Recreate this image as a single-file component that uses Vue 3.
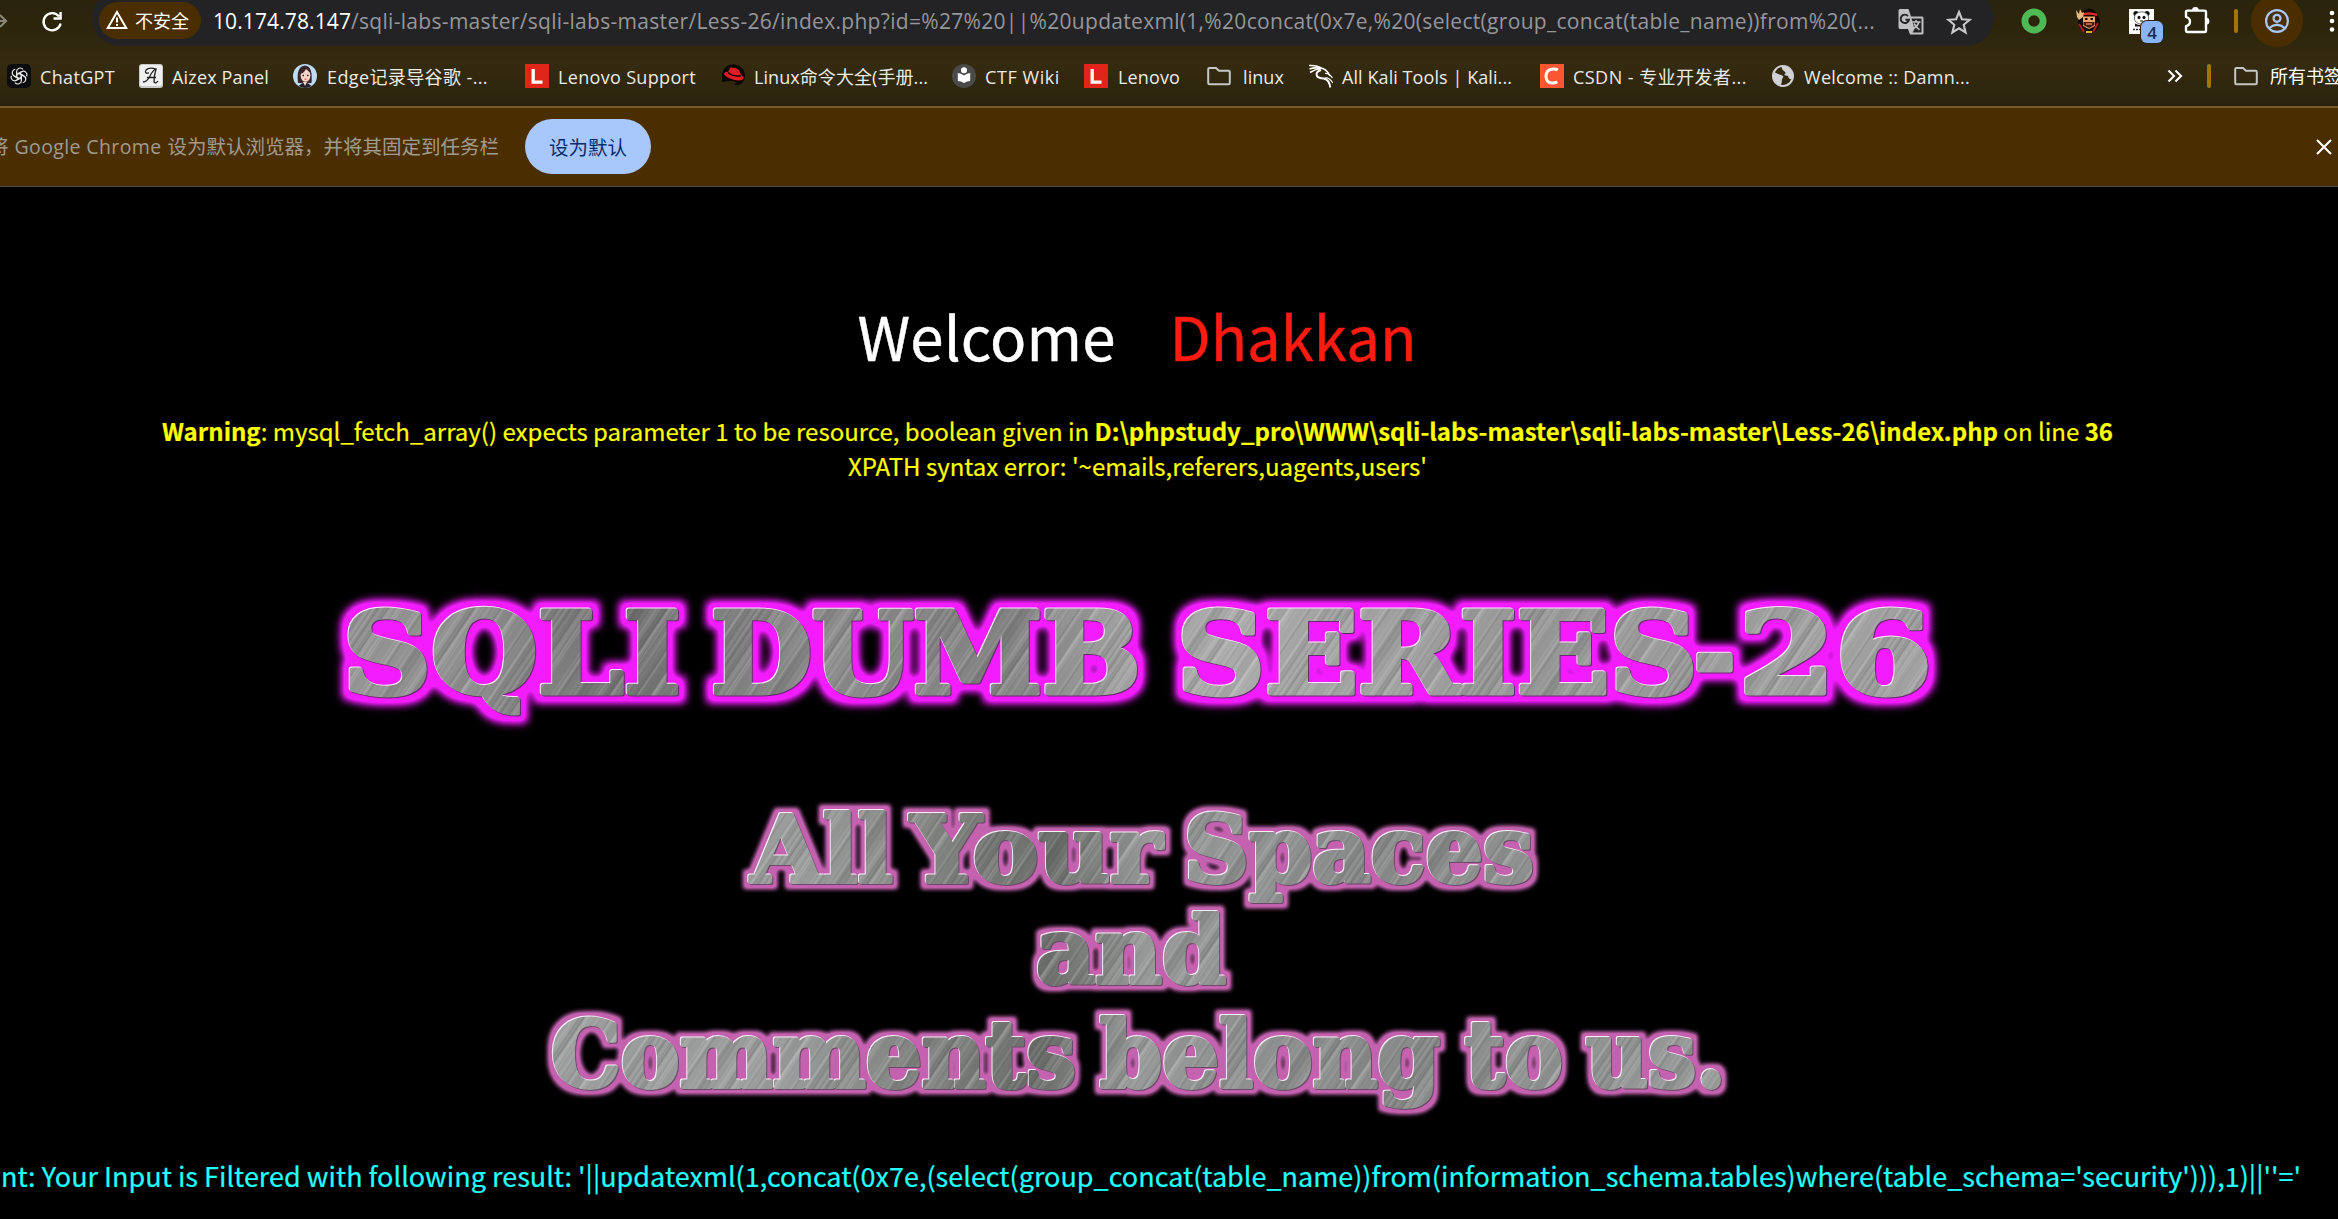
<script setup>
// v-fit="px": tracks the text so that it takes exactly the given width
const vFit = {
  mounted(el, { value }) {
    const natural = el.getBoundingClientRect().width
    el.style.letterSpacing = (value - natural) / el.textContent.length + 'px'
  },
}

const bookmarks = [
  { icon: 'gpt', text: 'ChatGPT', width: 75, left: 7, gap: 9 },
  { icon: 'aizex', text: 'Aizex Panel', width: 97, left: 139, gap: 9 },
  { icon: 'girl', text: 'Edge记录导谷歌 -...', width: 161, left: 293, gap: 10 },
  { icon: 'lenovo', text: 'Lenovo Support', width: 138, left: 525, gap: 9 },
  { icon: 'redhat', text: 'Linux命令大全(手册...', width: 174, left: 721, gap: 9 },
  { icon: 'ctf', text: 'CTF Wiki', width: 75, left: 952, gap: 9 },
  { icon: 'lenovo', text: 'Lenovo', width: 62, left: 1084, gap: 10 },
  { icon: 'folder', text: 'linux', width: 41, left: 1207, gap: 12 },
  { icon: 'kali', text: 'All Kali Tools | Kali...', width: 170, left: 1309, gap: 9 },
  { icon: 'csdn', text: 'CSDN - 专业开发者...', width: 174, left: 1540, gap: 9 },
  { icon: 'globe', text: 'Welcome :: Damn...', width: 166, left: 1771, gap: 9 },
]
bookmarks.forEach((b, i) => {
  const prev = bookmarks[i - 1]
  b.margin = prev ? b.left - (prev.left + 24 + prev.gap + prev.width) : b.left
})

const seriesWords = [
  { text: 'SQLI', x: 343, y: 692, w: 338 },
  { text: 'DUMB', x: 711, y: 692, w: 430 },
  { text: 'SERIES', x: 1177, y: 692, w: 521 },
  { text: '-', x: 1694, y: 692, w: 42 },
  { text: '26', x: 1739, y: 692, w: 193 },
]
const sloganWords = [
  { text: 'All', x: 751, y: 881, w: 142 },
  { text: 'Your', x: 911, y: 881, w: 251 },
  { text: 'Spaces', x: 1184, y: 881, w: 350 },
  { text: 'and', x: 1036, y: 982, w: 190 },
  { text: 'Comments', x: 551, y: 1086, w: 525 },
  { text: 'belong', x: 1100, y: 1086, w: 340 },
  { text: 'to', x: 1465, y: 1086, w: 98 },
  { text: 'us.', x: 1586, y: 1086, w: 140 },
]

// fine scratches of the brushed metal
const rand = (n) => Math.abs(Math.sin(n * 12.9898) * 43758.5453) % 1
const scratches = Array.from({ length: 90 }, (_, i) => ({
  x: rand(i + 1) * 158,
  w: 0.6 + rand(i + 101) * 1.6,
  fill: i % 2 ? '#fff' : '#222',
  o: (i % 2 ? 0.05 : 0.03) + rand(i + 201) * 0.12,
}))
</script>

<template>
  <div class="window">
    <header class="chrome">
      <div class="toolbar">
        <svg class="forward" width="8" height="24" viewBox="0 0 8 24"><path d="M0 12H6M0 6L6 12L0 18" fill="none" stroke="#8b8778" stroke-width="2.2" /></svg>
        <svg class="reload" width="24" height="24" viewBox="0 0 24 24"><path d="M19 7.5A8.6 8.6 0 1 0 20.6 14.5M20.6 3V9.5H13.5" fill="none" stroke="#fff" stroke-width="2.4" /></svg>
        <div class="address">
          <div class="chip">
            <svg width="22" height="20" viewBox="0 0 22 20"><path d="M11 2L20.2 18H1.8Z" fill="none" stroke="#fff" stroke-width="2" /><path d="M11 7.5V12.6M11 14V16" stroke="#fff" stroke-width="2" /></svg>
            <span v-fit="54">不安全</span>
          </div>
          <div class="url"><span v-fit="138" class="host">10.174.78.147</span><span v-fit="1524">/sqli-labs-master/sqli-labs-master/Less-26/index.php?id=%27%20||%20updatexml(1,%20concat(0x7e,%20(select(group_concat(table_name))from%20(...</span></div>
          <svg class="translate" width="26" height="26" viewBox="0 0 26 26">
            <path d="M2 0H10.5L13 7.5H24Q25.5 7.5 25.5 9V24Q25.5 25.5 24 25.5H12L10 20H2Q.5 20 .5 18V2Q.5 0 2 0Z" fill="#c0c0c2" />
            <path d="M13.5 9.5H23.5V23.5H14.5L16.5 20Z" fill="#242428" />
            <path d="M10 7A4.2 4.2 0 1 0 11 10.7H7.5" fill="none" stroke="#242428" stroke-width="1.9" />
            <path d="M14 13H22.5M18 11V13M21 13Q19.5 17.5 15.5 19.5M16 14.5Q18 18 21.5 21" fill="none" stroke="#c0c0c2" stroke-width="1.6" />
          </svg>
          <svg class="star" width="26" height="26" viewBox="0 0 26 26"><path d="M13 3L15.9 10.2L23.6 10.8L17.7 15.8L19.6 23.4L13 19.3L6.4 23.4L8.3 15.8L2.4 10.8L10.1 10.2Z" fill="none" stroke="#c7c7c7" stroke-width="2.1" /></svg>
        </div>
        <div class="tools">
          <svg class="ring" width="26" height="26" viewBox="0 0 26 26"><circle cx="13" cy="13" r="9.1" fill="none" stroke="#4fb955" stroke-width="6.8" /></svg>
          <svg class="ninja" width="26" height="26" viewBox="0 0 26 26">
            <circle cx="14" cy="14" r="11" fill="#100b08" />
            <path d="M8 3Q14-2 20 3L21 8H7Z" fill="#080605" /><path d="M6 7Q14 4 22 7" fill="none" stroke="#e02b2b" stroke-width="2.4" />
            <path d="M8 8.5H20V18L14 21L8 18Z" fill="#e7a46c" /><path d="M8.5 14H19.5V17L14 20L8.5 17Z" fill="#4a150f" /><path d="M10 11H12.5M15.5 11H18" stroke="#180c08" stroke-width="1.8" />
            <path d="M1 2L4 6L5 1L7 5L9 4L8 9L4 12L2 9Z" fill="#eab87a" /><path d="M4 16L9 24M23 15L18 24" stroke="#b31c1c" stroke-width="2" /><path d="M11 24H17" stroke="#d9b12c" stroke-width="2" />
            <path d="M11 16H17" stroke="#e08a5a" stroke-width="1.4" />
          </svg>
          <div class="panda">
            <svg width="25" height="25" viewBox="0 0 25 25">
              <rect width="25" height="25" fill="#fff" /><circle cx="7" cy="4.5" r="2.6" fill="#111" /><circle cx="18" cy="4.5" r="2.6" fill="#111" />
              <ellipse cx="12.5" cy="9" rx="7.2" ry="6.2" fill="#fff" stroke="#444" stroke-width=".8" /><ellipse cx="10" cy="8.5" rx="1.5" ry="1.8" fill="#111" /><ellipse cx="15" cy="8.5" rx="1.5" ry="1.8" fill="#111" /><path d="M11 12H14" stroke="#111" />
              <path d="M6 14.5Q12 18 18 14.5L19 17.5H6Z" fill="#161616" /><path d="M4 20.5H13" stroke="#333" stroke-width="1.5" stroke-dasharray="2 1" />
            </svg>
            <span class="badge">4</span>
          </div>
          <svg class="puzzle" width="26" height="28" viewBox="0 0 26 28"><path d="M2 5.8Q2 4.6 3.2 4.6H20.5Q22 4.6 22 6V25Q22 26 20.7 26H3.2Q2 26 2 24.8V20.2Q6 19 6 15.5Q6 12 2 10.8Z" fill="none" stroke="#fff" stroke-width="2.4" stroke-linejoin="round" /><path d="M8 4.5A3.4 3.4 0 0 1 14.8 4.5ZM22 11.8A3.4 3.4 0 0 1 22 18.6Z" fill="#fff" /></svg>
          <i class="divider" />
          <div class="avatar"><svg width="26" height="26" viewBox="0 0 26 26" fill="none" stroke="#a8c7fa" stroke-width="2.2"><circle cx="13" cy="13" r="10.9" /><circle cx="13" cy="10.3" r="3.5" /><path d="M5.2 20Q13 13.5 20.8 20" /></svg></div>
          <svg class="dots" width="6" height="26" viewBox="0 0 6 26" fill="#fff"><circle cx="3" cy="5" r="2.3" /><circle cx="3" cy="13" r="2.3" /><circle cx="3" cy="21.5" r="2.3" /></svg>
        </div>
      </div>

      <nav class="bookmarks">
        <div v-for="(b, i) in bookmarks" :key="i" class="bookmark" :style="{ marginLeft: b.margin + 'px', gap: b.gap + 'px' }">
          <svg width="24" height="24" viewBox="0 0 24 24">
            <g v-if="b.icon === 'gpt'">
              <rect width="24" height="24" rx="5" fill="#0c0c0c" />
              <g fill="none" stroke="#e6e6e6" stroke-width="1.2"><path v-for="n in 6" :key="n" :transform="`rotate(${n * 60} 12 12)`" d="M12 14.7L9.6 13.3V7.6A3.6 3.6 0 0 1 16 5.4M12 9.2L16.9 12" /></g>
            </g>
            <g v-else-if="b.icon === 'aizex'">
              <rect width="24" height="24" rx="3" fill="#c9c9c9" /><rect x="1" y="1" width="22" height="21" rx="2" fill="#f0f0f0" />
              <path d="M4 18Q8 18 11 12T17 5Q15 12 15 18Q17 20 19 17M8 13.5H17M10 9Q5 10 7 6Q10 3 17 5" fill="none" stroke="#222" stroke-width="1.3" />
            </g>
            <g v-else-if="b.icon === 'girl'">
              <circle cx="12" cy="12" r="12" fill="#bfdcf5" /><path d="M5 19Q3 2 12 1.5Q20 2 18.5 19Z" fill="#3a2626" /><ellipse cx="12.5" cy="11.5" rx="4.9" ry="6.3" fill="#f6d5c6" />
              <path d="M7 10Q12 9 13 4Q15 8 18 9Q18 3 12 3Q7 4 7 10Z" fill="#3a2626" /><path d="M5.5 22Q12 15 18.5 22Q12 26 5.5 22Z" fill="#20202a" /><path d="M10 18L12 22L14 18Z" fill="#f6d5c6" />
              <path d="M9.5 11.5H11M14 11.5H15.5" stroke="#322" stroke-width="1.4" /><path d="M11.5 15.2H13.5" stroke="#d5494f" stroke-width="1.1" />
            </g>
            <g v-else-if="b.icon === 'lenovo'"><rect width="24" height="24" fill="#e1251b" /><path d="M8.2 5V18.2H17.5" fill="none" stroke="#fff" stroke-width="3.3" /></g>
            <g v-else-if="b.icon === 'redhat'">
              <path d="M1 13A11.5 11.5 0 1 1 23.5 15Q21 21 15 21Q17 18 12 17Q4 17 1 18Z" fill="#070404" /><path d="M7 8L9.5 3.5Q15 3 18 6L20 11Q24 13 22 15.5Q17 18 9 14.5Q3 12 3 9.5Q4 7 7 8Z" fill="#e31b23" /><path d="M7 8.5Q12 13 19.8 11.8" fill="none" stroke="#120505" stroke-width="1.5" /><path d="M13 20L16 18L15 22Z" fill="#111" />
            </g>
            <g v-else-if="b.icon === 'ctf'"><circle cx="12" cy="12" r="12" fill="#4a4a4a" /><circle cx="12" cy="6.2" r="3" fill="#fff" /><path d="M12 11.5Q9 9 5.8 9V17Q9 17 12 19Q15 17 18.2 17V9Q15 9 12 11.5Z" fill="#fff" /></g>
            <path v-else-if="b.icon === 'folder'" d="M1.2 5.2Q1.2 4 2.4 4H9L12 6.8H21.6Q22.8 6.8 22.8 8V19Q22.8 20.2 21.6 20.2H2.4Q1.2 20.2 1.2 19Z" fill="none" stroke="#c4c7c5" stroke-width="2" />
            <g v-else-if="b.icon === 'kali'" fill="none" stroke="#fff"><path d="M0 1.5Q8 1 13 4.5M.5 5Q6 3 12 4.5M1 8.5Q6 5 11.5 4.7M11 4Q17 4 21 12" stroke-width="1.6" /><path d="M12 6Q6 8 8 12Q9 14 15 14.5Q20.5 16 21.2 23.5" stroke-width="2" /><path d="M16 9.5Q20 9 23.5 14M16 14Q20 13 24 19" stroke-width="1.2" /></g>
            <g v-else-if="b.icon === 'csdn'"><rect width="24" height="24" fill="#fc5531" /><path d="M17.8 6Q16 4.8 13 5Q6 5.5 6 12.5Q6.3 19 12 19Q15.5 19 17.3 17.7" fill="none" stroke="#fff" stroke-width="3" /></g>
            <g v-else><circle cx="12" cy="12" r="10" fill="none" stroke="#d0d1d5" stroke-width="2" /><path d="M3 8Q7 10 10 11Q14 12 11 15Q11 18 10 21Q2 20 2 12ZM11 2Q10 5 13 7Q16 9 13 11L17 12Q18 16 21 15Q23 7 16 3Z" fill="#d0d1d5" /></g>
          </svg>
          <span v-fit="b.width">{{ b.text }}</span>
        </div>
        <div class="bookmark-end">
          <svg width="16" height="14" viewBox="0 0 16 14"><path d="M1.5 1.5L7 7L1.5 12.5M8.5 1.5L14 7L8.5 12.5" fill="none" stroke="#fff" stroke-width="2.1" /></svg>
          <i class="divider" />
          <svg class="all-folder" width="24" height="24" viewBox="0 0 24 24"><path d="M1.2 5.2Q1.2 4 2.4 4H9L12 6.8H21.6Q22.8 6.8 22.8 8V19Q22.8 20.2 21.6 20.2H2.4Q1.2 20.2 1.2 19Z" fill="none" stroke="#c4c7c5" stroke-width="2" /></svg>
          <span class="all">所有书签</span>
        </div>
      </nav>
    </header>

    <div class="infobar">
      <p><span class="cut">将</span><span v-fit="147" class="brand">Google Chrome</span><span>设为默认浏览器，并将其固定到任务栏</span></p>
      <button>设为默认</button>
      <svg width="18" height="18" viewBox="0 0 18 18"><path d="M2 2L16 16M16 2L2 16" stroke="#fff" stroke-width="2.1" /></svg>
    </div>

    <main>
      <h1><span v-fit="258">Welcome</span><span v-fit="247" class="name">Dhakkan</span></h1>
      <div class="messages">
        <p v-fit="1951"><b>Warning</b>: mysql_fetch_array() expects parameter 1 to be resource, boolean given in <b>D:\phpstudy_pro\WWW\sqli-labs-master\sqli-labs-master\Less-26\index.php</b> on line <b>36</b></p>
        <p v-fit="579">XPATH syntax error: '~emails,referers,uagents,users'</p>
      </div>
      <svg class="art" width="2338" height="600" viewBox="0 540 2338 600">
        <defs>
          <linearGradient id="sheen" gradientUnits="userSpaceOnUse" x1="340" y1="0" x2="1930" y2="0">
            <stop offset="0" stop-color="#969696" /><stop offset=".1" stop-color="#8b8b8b" /><stop offset=".18" stop-color="#717171" /><stop offset=".3" stop-color="#8c8c8c" /><stop offset=".42" stop-color="#828282" /><stop offset=".49" stop-color="#a0a0a0" /><stop offset=".56" stop-color="#aaaaaa" /><stop offset=".75" stop-color="#969696" /><stop offset="1" stop-color="#a2a2a2" />
          </linearGradient>
          <linearGradient id="sheen2" gradientUnits="userSpaceOnUse" x1="550" y1="1000" x2="1730" y2="1000" gradientTransform="rotate(4 1100 1000)">
            <stop offset="0" stop-color="#9a9d9b" /><stop offset=".2" stop-color="#9a9d9b" /><stop offset=".34" stop-color="#7c7e7c" /><stop offset=".42" stop-color="#6c6e6c" /><stop offset=".5" stop-color="#969997" /><stop offset=".7" stop-color="#868987" /><stop offset="1" stop-color="#989b99" />
          </linearGradient>
          <pattern id="scratch" patternUnits="userSpaceOnUse" width="160" height="300" patternTransform="rotate(34)">
            <rect v-for="(s, i) in scratches" :key="i" :x="s.x" y="0" :width="s.w" height="300" :fill="s.fill" :opacity="s.o" />
          </pattern>
          <pattern id="metal" patternUnits="userSpaceOnUse" width="2338" height="1219"><rect width="2338" height="1219" fill="url(#sheen)" /><rect width="2338" height="1219" fill="url(#scratch)" /></pattern>
          <pattern id="metal2" patternUnits="userSpaceOnUse" width="2338" height="1219"><rect width="2338" height="1219" fill="url(#sheen2)" /><rect width="2338" height="1219" fill="url(#scratch)" /></pattern>
          <filter id="neon" filterUnits="userSpaceOnUse" x="300" y="560" width="1700" height="190" color-interpolation-filters="sRGB">
            <feMorphology in="SourceAlpha" operator="dilate" radius="7" /><feGaussianBlur stdDeviation="4.5" /><feComponentTransfer result="halo"><feFuncA type="linear" slope="1.5" /></feComponentTransfer>
            <feFlood flood-color="#f31cff" /><feComposite in2="halo" operator="in" result="glow" />
            <feOffset in="SourceAlpha" dx="1" dy="1" result="o1" /><feFlood flood-color="#6a2a70" /><feComposite in2="o1" operator="in" result="dark" />
            <feOffset in="SourceAlpha" dx="-1.4" dy="-1.4" result="o2" /><feFlood flood-color="#fff" flood-opacity=".9" /><feComposite in2="o2" operator="in" result="light" />
            <feMerge><feMergeNode in="glow" /><feMergeNode in="dark" /><feMergeNode in="light" /><feMergeNode in="SourceGraphic" /></feMerge>
          </filter>
          <filter id="soft" filterUnits="userSpaceOnUse" x="500" y="780" width="1300" height="350" color-interpolation-filters="sRGB">
            <feMorphology in="SourceAlpha" operator="dilate" radius="5" /><feGaussianBlur stdDeviation="2" /><feComponentTransfer result="halo"><feFuncA type="linear" slope="1.3" /></feComponentTransfer>
            <feFlood flood-color="#c462b0" /><feComposite in2="halo" operator="in" result="glow" />
            <feOffset in="SourceAlpha" dx="1" dy="1" result="o1" /><feFlood flood-color="#6b4a66" /><feComposite in2="o1" operator="in" result="dark" />
            <feOffset in="SourceAlpha" dx="-1.4" dy="-1.4" result="o2" /><feFlood flood-color="#fff" flood-opacity=".9" /><feComposite in2="o2" operator="in" result="light" />
            <feMerge><feMergeNode in="glow" /><feMergeNode in="dark" /><feMergeNode in="light" /><feMergeNode in="SourceGraphic" /></feMerge>
          </filter>
        </defs>
        <g class="series" filter="url(#neon)">
          <text v-for="w in seriesWords" :key="w.text" :x="w.x" :y="w.y" :textLength="w.w" lengthAdjust="spacingAndGlyphs">{{ w.text }}</text>
        </g>
        <g class="slogan" filter="url(#soft)">
          <text v-for="w in sloganWords" :key="w.text" :x="w.x" :y="w.y" :textLength="w.w" lengthAdjust="spacingAndGlyphs">{{ w.text }}</text>
        </g>
      </svg>
      <p class="hint"><span v-fit="2300">nt: Your Input is Filtered with following result: '||updatexml(1,concat(0x7e,(select(group_concat(table_name))from(information_schema.tables)where(table_schema='security'))),1)||''='</span></p>
    </main>
  </div>
</template>

<style>
body { background: #000; overflow: hidden; }
</style>

<style scoped>
.window { width: 2338px; height: 1219px; overflow: hidden; background: #000; font-family: "Open Sans", "Noto Sans CJK SC", sans-serif; color: #fff; }
.window * { box-sizing: border-box; }
svg { display: block; flex: none; }
p, h1 { margin: 0; font-weight: 400; }
span { white-space: pre; }

.chrome { height: 108px; border-bottom: 2px solid #78582f; background: linear-gradient(#2b240c 0, #2c250c 30px, #352b10 62px, #2a230b 106px); }
.toolbar { height: 46px; display: flex; align-items: flex-start; }
.forward { margin-top: 9px; }
.reload { margin: 9px 0 0 32px; }
.address { width: 1902px; height: 56px; margin: -10px 0 0 28px; padding: 7px 0 0 7px; border-radius: 28px; background: #232326; display: flex; align-items: center; }
.chip { width: 102px; height: 37px; border-radius: 19px; background: #4a2e00; display: flex; align-items: center; gap: 7px; padding-left: 7px; font-size: 18px; line-height: 26px; margin-bottom: 2px; }
.chip svg { margin-top: -2px; }
.url { width: 1662px; margin: -2px 0 0 12px; font-size: 21px; line-height: 30px; color: #96969a; display: flex; }
.host { color: #fff; }
.translate { margin-left: 23px; }
.star { margin-left: 22px; }
.tools { display: flex; align-items: center; height: 42px; }
.ring { margin-left: 27px; }
.ninja { margin-left: 28px; }
.panda { position: relative; margin-left: 28px; }
.badge { position: absolute; left: 12px; top: 12px; width: 22px; height: 22px; border-radius: 6px; background: #8ab4f8; box-shadow: 0 0 0 1px #2c250c; color: #1b2a4a; font-size: 17px; font-weight: 600; line-height: 23px; text-align: center; }
.puzzle { margin: -3px 0 0 30px; }
.divider { width: 4px; height: 24px; border-radius: 2px; background: #a67405; flex: none; }
.tools .divider { margin-left: 24px; }
.avatar { width: 52px; height: 52px; border-radius: 50%; background: #4a2e00; display: flex; align-items: center; justify-content: center; margin-left: 13px; flex: none; }
.dots { margin-left: 26px; }

.bookmarks { height: 60px; display: flex; align-items: center; font-size: 18px; line-height: 26px; }
.bookmark { display: flex; align-items: center; flex: none; color: #eceae4; }
.bookmark span { position: relative; top: 1px; }
.bookmark-end { display: flex; align-items: center; margin-left: 197px; flex: none; }
.bookmark-end .divider { margin-left: 24px; }
.all-folder { margin-left: 23px; }
.all { margin-left: 12px; }

.infobar { height: 79px; background: #4a2e00; border-bottom: 1px solid #4b4a48; display: flex; align-items: center; font-size: 19.5px; color: #a19a90; padding-bottom: 1px; }
.infobar p { display: flex; width: 500px; line-height: 28px; flex: none; }
.cut { margin-left: -11px; }
.brand { margin: 0 6px 0 6px; }
.infobar button { width: 126px; height: 55px; margin-left: 25px; border: 0; border-radius: 28px; background: #a8c7fa; color: #062e6f; font: inherit; padding: 0; }
.infobar svg { margin-left: auto; margin-right: 5px; }

main { font-family: "Noto Sans CJK SC", sans-serif; }
h1 { display: flex; justify-content: center; height: 222px; padding-top: 103px; margin-right: 64px; font-size: 60px; line-height: 90px; }
h1 span { -webkit-text-stroke: 0.4px currentColor; }
.name { color: #ff1a12; margin-left: 54px; }
.messages { color: #ff0; font-size: 24px; line-height: 35px; display: flex; flex-direction: column; align-items: center; margin-right: 63px; padding-top: 4px; }
.messages p { white-space: nowrap; -webkit-text-stroke: 0.2px currentColor; }
.art { margin-top: 58px; }
.art text { font-family: "DejaVu Serif", serif; font-weight: 700; stroke-linejoin: round; }
.series text { font-size: 112px; fill: url(#metal); stroke: url(#metal); stroke-width: 5; }
.slogan text { font-size: 92px; fill: url(#metal2); stroke: url(#metal2); stroke-width: 4; }
.hint { color: #2ff; font-size: 27px; line-height: 40px; margin: 15px 0 0 1px; -webkit-text-stroke: 0.2px currentColor; }
</style>
